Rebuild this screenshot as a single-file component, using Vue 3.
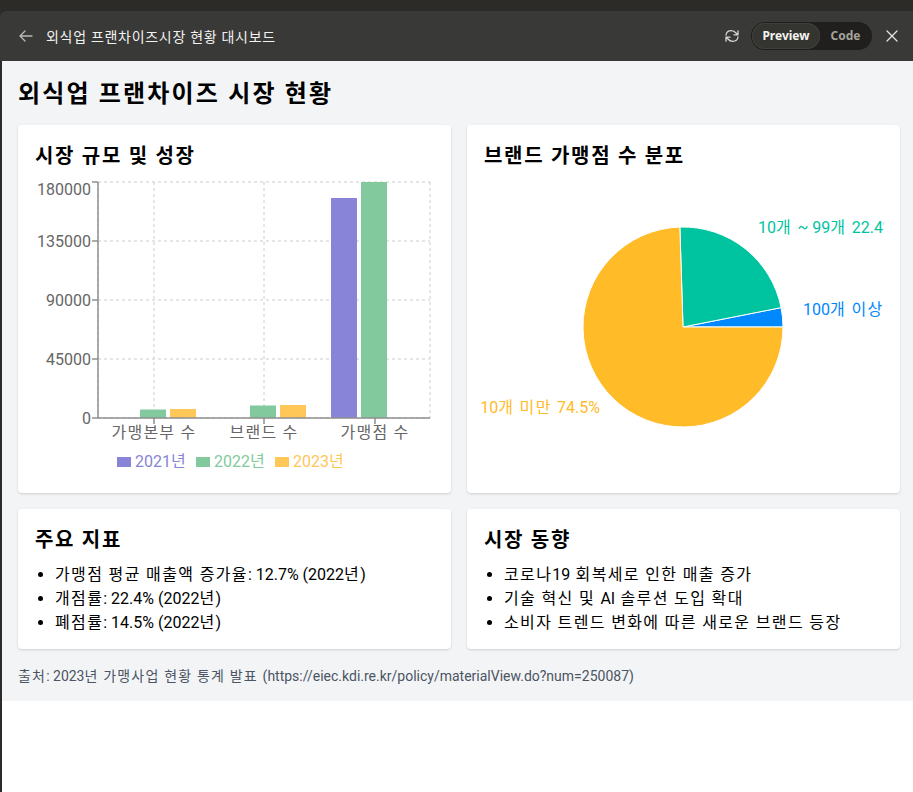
<script setup>
const gridX = [98, 154, 264, 375, 430]
const yTicks = [
  { y: 182, label: '180000' },
  { y: 241, label: '135000' },
  { y: 300, label: '90000' },
  { y: 359, label: '45000' },
  { y: 418, label: '0' },
]
const xTicks = [
  { x: 154, label: '가맹본부 수' },
  { x: 264, label: '브랜드 수' },
  { x: 375, label: '가맹점 수' },
]
const bars = [
  { x: 140, top: 409.5, fill: '#82ca9d' },
  { x: 170, top: 409, fill: '#ffc658' },
  { x: 250, top: 405.5, fill: '#82ca9d' },
  { x: 280, top: 405, fill: '#ffc658' },
  { x: 331, top: 198, fill: '#8884d8' },
  { x: 361, top: 182, fill: '#82ca9d' },
]
const legend = [
  { name: '2021년', color: '#8884d8' },
  { name: '2022년', color: '#82ca9d' },
  { name: '2023년', color: '#ffc658' },
]

// pie goes counter-clockwise from 3 o'clock
const cx = 199
const cy = 150
const r = 100
const slices = [
  { value: 3.1, fill: '#0088FE' },
  { value: 22.4, fill: '#00C49F' },
  { value: 74.5, fill: '#FFBB28' },
]
function slicePath(start, end) {
  const a0 = (start * Math.PI) / 180
  const a1 = (end * Math.PI) / 180
  const x0 = cx + r * Math.cos(a0)
  const y0 = cy - r * Math.sin(a0)
  const x1 = cx + r * Math.cos(a1)
  const y1 = cy - r * Math.sin(a1)
  const large = end - start > 180 ? 1 : 0
  return `M${cx},${cy} L${x0},${y0} A${r},${r} 0 ${large} 0 ${x1},${y1} Z`
}
let angle = 0
const pie = slices.map((s) => {
  const start = angle
  angle += (s.value / 100) * 360
  return { d: slicePath(start, angle), fill: s.fill }
})
const pieLabels = [
  { x: 319, y: 138, anchor: 'start', fill: '#0088FE', text: '100개 이상 3.1%' },
  { x: 274, y: 56, anchor: 'start', fill: '#00C49F', text: '10개 ~ 99개 22.4%' },
  { x: 116, y: 236, anchor: 'end', fill: '#FFBB28', text: '10개 미만 74.5%' },
]

const metrics = ['가맹점 평균 매출액 증가율: 12.7% (2022년)', '개점률: 22.4% (2022년)', '폐점률: 14.5% (2022년)']
const trends = ['코로나19 회복세로 인한 매출 증가', '기술 혁신 및 AI 솔루션 도입 확대', '소비자 트렌드 변화에 따른 새로운 브랜드 등장']
const source = '출처: 2023년 가맹사업 현황 통계 발표 (https://eiec.kdi.re.kr/policy/materialView.do?num=250087)'

// hangul is set wider than latin, so split the text in runs
function runs(text) {
  return text.match(/[가-힣 ]+|[^가-힣 ]+/g).map((t) => ({ text: t, ko: /[가-힣]/.test(t) }))
}
</script>

<template>
  <div class="shell">
    <header class="topbar">
      <svg class="icon back" width="16" height="16" viewBox="0 0 16 16">
        <path d="M14 8H2.500M7 3 2 8l5 5" />
      </svg>
      <span class="topbar__title">외식업 프랜차이즈시장 현황 대시보드</span>
      <svg class="icon refresh" width="16" height="16" viewBox="0 0 16 16">
        <path d="M2 7c.4-2.600 2.600-4.300 5.200-4.300 2 0 3.600 .8 4.800 2.300L14 6.800M14 2.800v4h-4" />
        <path d="M14 9c-.4 2.600-2.600 4.300-5.200 4.300-2 0-3.600-.8-4.800-2.300L2 9.200M2 13.200v-4h4" />
      </svg>
      <div class="toggle">
        <span class="toggle__item toggle__item--on">Preview</span>
        <span class="toggle__item">Code</span>
      </div>
      <svg class="icon close" width="14" height="14" viewBox="0 0 14 14">
        <path d="M2 2l10 10M12 2 2 12" />
      </svg>
    </header>

    <div class="frame">
      <main class="dash">
        <h1>외식업 프랜차이즈 시장 현황</h1>
        <div class="grid">
          <section class="card">
            <h2>시장 규모 및 성장</h2>
            <div class="chart">
              <svg width="400" height="268" viewBox="35 177 400 268">
                <line v-for="x in gridX" :key="x" :x1="x" :x2="x" y1="182" y2="418" class="gridline" />
                <line v-for="t in yTicks" :key="t.y" x1="98" x2="430" :y1="t.y" :y2="t.y" class="gridline" />
                <rect v-for="b in bars" :key="b.x" :x="b.x" :y="b.top" width="26" :height="418 - b.top" :fill="b.fill" />
                <line x1="98" x2="98" y1="182" y2="418" class="axis" />
                <line x1="98" x2="430" y1="418" y2="418" class="axis" />
                <g v-for="t in yTicks" :key="t.label">
                  <line x1="92" x2="98" :y1="t.y" :y2="t.y" class="axis" />
                  <text x="91" :y="Math.max(t.y, 189) + 6" text-anchor="end" class="tick">{{ t.label }}</text>
                </g>
                <g v-for="t in xTicks" :key="t.x">
                  <line :x1="t.x" :x2="t.x" y1="418" y2="424" class="axis" />
                  <text :x="t.x" y="438" text-anchor="middle" class="tick tick--ko">{{ t.label }}</text>
                </g>
              </svg>
              <ul class="legend">
                <li v-for="l in legend" :key="l.name" :style="{ color: l.color }">
                  <i :style="{ background: l.color }"></i>
                  <span v-for="(run, i) in runs(l.name)" :key="i" :class="{ ko: run.ko }">{{ run.text }}</span>
                </li>
              </ul>
            </div>
          </section>

          <section class="card">
            <h2>브랜드 가맹점 수 분포</h2>
            <svg class="pie" width="403" height="300" viewBox="-3 0 403 300">
              <path v-for="p in pie" :key="p.fill" :d="p.d" :fill="p.fill" stroke="#fff" />
              <text v-for="l in pieLabels" :key="l.text" :x="l.x" :y="l.y" :text-anchor="l.anchor" :fill="l.fill" class="pie-label">
                <tspan v-for="(run, i) in runs(l.text)" :key="i" :class="{ ko: run.ko }">{{ run.text }}</tspan>
              </text>
            </svg>
          </section>

          <section class="card">
            <h2>주요 지표</h2>
            <ul class="bullets">
              <li v-for="m in metrics" :key="m">
                <span v-for="(run, i) in runs(m)" :key="i" :class="{ ko: run.ko }">{{ run.text }}</span>
              </li>
            </ul>
          </section>

          <section class="card">
            <h2>시장 동향</h2>
            <ul class="bullets">
              <li v-for="t in trends" :key="t">
                <span v-for="(run, i) in runs(t)" :key="i" :class="{ ko: run.ko }">{{ run.text }}</span>
              </li>
            </ul>
          </section>
        </div>
        <p class="source">
          <span v-for="(run, i) in runs(source)" :key="i" :class="{ ko: run.ko }">{{ run.text }}</span>
        </p>
      </main>
    </div>
  </div>
</template>

<style scoped>
.shell {
  height: 792px;
  display: flex;
  flex-direction: column;
  background: #2c2b27;
  padding-top: 11px;
  box-sizing: border-box;
  overflow: hidden;
  font-family: Roboto, "Noto Sans CJK KR", sans-serif;
}

.ko {
  letter-spacing: 0.085em;
}

.topbar {
  height: 50px;
  flex: none;
  display: flex;
  align-items: center;
  background: #393937;
  color: #f2f2f0;
  padding-left: 18px;
  border-radius: 6px 0 0 0;
}

.topbar__title {
  margin-left: 12px;
  font-size: 14px;
  letter-spacing: 0.7px;
  flex: 1;
}

.icon {
  fill: none;
  stroke-width: 1.300;
  stroke-linecap: round;
  stroke-linejoin: round;
  flex: none;
}

.back {
  stroke: #b9b9b5;
}

.refresh {
  stroke: #d6d6d2;
}

.close {
  stroke: #e4e4e0;
  margin: 0 14px 0 13px;
}

.toggle {
  margin-left: 11px;
  width: 121px;
  height: 28px;
  display: flex;
  align-items: center;
  border-radius: 14px;
  background: #201f1d;
  box-sizing: border-box;
  padding-left: 1px;
}

.toggle__item {
  font-family: "Noto Sans", sans-serif;
  font-size: 12px;
  font-weight: 700;
  color: #a5a39c;
  text-align: center;
  line-height: 26px;
  width: 51px;
}

.toggle__item--on {
  width: 68px;
  color: #f4f4f0;
  background: #343431;
  border-radius: 13px;
  box-shadow: inset 0 0 0 1px #3f3f3b;
}

.frame {
  flex: 1;
  margin-left: 2px;
  background: #fff;
}

.dash {
  background: #f3f4f6;
  padding: 16px 13px 16px 16px;
}

h1 {
  margin: 1px 0 15px;
  font-size: 24px;
  line-height: 32px;
  font-weight: 700;
  letter-spacing: 0.09em;
  color: #000;
}

.grid {
  display: grid;
  grid-template-columns: 433px 433px;
  gap: 16px;
}

.card {
  background: #fff;
  border-radius: 4px;
  padding: 16px 17px;
  box-shadow: 0 1px 3px rgba(0, 0, 0, 0.1), 0 1px 2px rgba(0, 0, 0, 0.06);
}

h2 {
  margin: 1px 0 7px;
  font-size: 20px;
  line-height: 28px;
  font-weight: 600;
  letter-spacing: 0.085em;
  color: #000;
}

.chart {
  height: 300px;
}

.chart svg,
.pie {
  display: block;
  overflow: hidden;
}

.pie {
  margin-left: -3px;
}

.gridline {
  stroke: #ccc;
  stroke-dasharray: 3 3;
}

.axis {
  stroke: #8f8f8f;
  stroke-width: 1.500;
}

.tick {
  font-size: 16px;
  fill: #666;
}

.tick--ko {
  letter-spacing: 0.075em;
}

.pie-label {
  font-size: 16px;
}

.legend {
  list-style: none;
  margin: 5px 0 0;
  padding: 0 7px 0 0;
  display: flex;
  justify-content: center;
  gap: 9px;
  font-size: 16px;
  line-height: 24px;
}

.legend li {
  display: flex;
  align-items: center;
}

.legend i {
  width: 14px;
  height: 10px;
  margin-right: 4px;
}

.bullets {
  margin: 0 0 -2px;
  padding: 2px 0 0 20px;
  font-size: 16px;
  line-height: 24px;
  color: #000;
}

.source {
  margin: 17px 0 -1px;
  font-size: 14px;
  line-height: 20px;
  color: #4b5563;
}
</style>
